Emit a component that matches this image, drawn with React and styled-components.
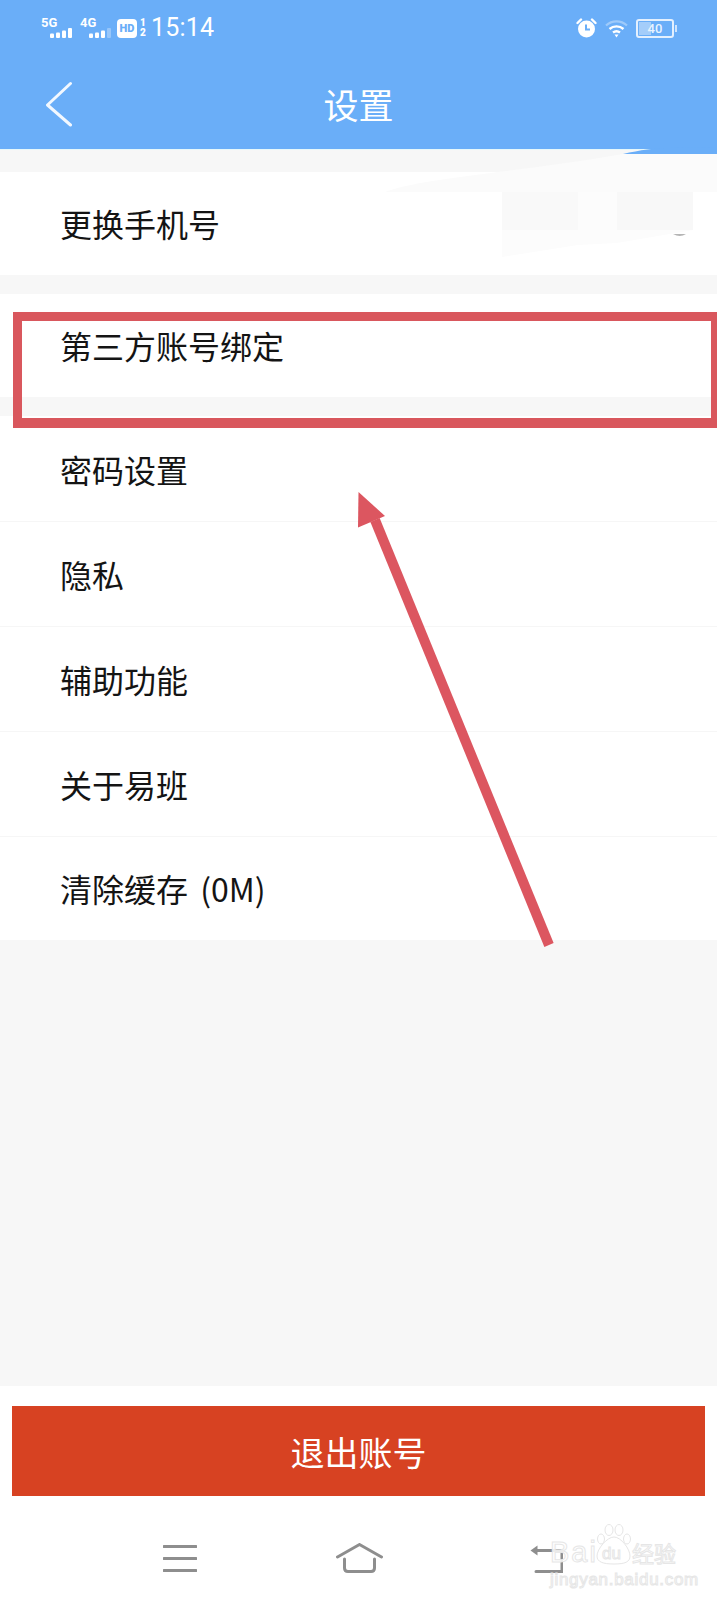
import React from "react";
import styled, { createGlobalStyle } from "styled-components";

const Global = createGlobalStyle`
  html, body { margin: 0; padding: 0; background: #fff; }
  * { box-sizing: border-box; }
`;

const CJK = `"Noto Sans CJK SC", "Noto Sans", sans-serif`;

const Screen = styled.div`
  position: relative;
  width: 717px;
  height: 1600px;
  overflow: hidden;
  display: flex;
  flex-direction: column;
  background: #f7f7f7;
  font-family: ${CJK};
`;
const BlueTop = styled.header`
  height: 150px;
  background: #6aaef8;
  border-bottom: 1px solid #e6f8fb;
  display: flex;
  flex-direction: column;
`;
const StatusBar = styled.div`
  height: 54px;
  padding: 2px 43px 0 41px;
  display: flex;
  align-items: center;
  justify-content: space-between;
  color: #fff;
`;
const StatusGroup = styled.div`
  display: flex;
  align-items: center;
`;
const StatusRight = styled(StatusGroup)`
  gap: 8px;
`;
const Net = styled.div`
  width: 39px;
  display: flex;
  flex-direction: column;
  align-items: flex-start;
  font: 700 13px/10px Roboto, sans-serif;
  svg { display: block; margin-left: 9px; }
`;
const HdBadge = styled.div`
  width: 20px;
  height: 19px;
  margin-left: -2px;
  border-radius: 4px;
  background: #fff;
  color: #6aaef8;
  font: 900 11px/19px Roboto, sans-serif;
  text-align: center;
`;
const SimSlots = styled.div`
  width: 8px;
  margin-left: 2px;
  font: 900 10px/10px Roboto, sans-serif;
  text-align: center;
  display: flex;
  flex-direction: column;
`;
const Clock = styled.div`
  margin-left: 4px;
  font: 400 25px/28px Roboto, sans-serif;
  letter-spacing: 0.2px;
`;
const Battery = styled.div`
  position: relative;
  width: 38px;
  height: 19px;
  padding: 1px;
  border: 2px solid #e4f0fe;
  border-radius: 3px;
  font: 500 13px/13px Roboto, sans-serif;
  text-align: center;
  color: #e8f3ff;
  background: linear-gradient(90deg, #a4cdfa 0 38%, transparent 38%);
  background-clip: content-box;
  &::after {
    content: "";
    position: absolute;
    right: -5px;
    top: 4px;
    width: 2px;
    height: 7px;
    background: #cfe4fd;
  }
`;
const Header = styled.div`
  position: relative;
  flex: 1;
  display: flex;
  align-items: center;
  justify-content: center;
  color: #fff;
  padding-top: 4px;
`;
const BackChevron = styled.svg`
  position: absolute;
  left: 45px;
  top: 27px;
`;
const Title = styled.h1`
  margin: 0;
  font-size: 35px;
  font-weight: 400;
  line-height: 44px;
`;
const Content = styled.main`
  flex: 1;
  padding-top: 22px;
  display: flex;
  flex-direction: column;
  gap: 19px;
`;
const Section = styled.section`
  background: #fff;
`;
const RowList = styled(Section)`
  padding-top: 1px;
`;
const Row = styled.div`
  height: ${(p) => p.$h || 103}px;
  padding: 0 0 1px 60px;
  display: flex;
  align-items: center;
  font-size: 32px;
  line-height: 40px;
  word-spacing: 5px;
  color: #141414;
  border-bottom: 1px solid ${(p) => (p.$line ? "#f6f6f6" : "transparent")};
`;
const Footer = styled.footer`
  height: 214px;
  background: #fff;
  padding: 20px 12px 0;
  display: flex;
  flex-direction: column;
`;
const LogoutButton = styled.button`
  height: 90px;
  border: 0;
  margin: 0;
  padding: 0;
  background: #d74222;
  color: #fff;
  font-family: ${CJK};
  font-size: 34px;
  font-weight: 400;
`;
const NavBar = styled.nav`
  margin-top: 47px;
  padding-left: 151px;
  display: flex;
  align-items: flex-start;
  gap: 139px;
  svg { display: block; }
`;
const RedFrame = styled.div`
  position: absolute;
  left: 13px;
  top: 312px;
  width: 707px;
  height: 116px;
  border: 9px solid #d9575d;
  border-bottom-width: 10px;
`;
const Overlay = styled.svg`
  position: absolute;
  left: 0;
  top: 0;
  pointer-events: none;
`;
const Watermark = styled.div`
  position: absolute;
  left: 550px;
  top: 1523px;
  width: 130px;
  color: rgba(255, 255, 255, 0.85);
  -webkit-text-stroke: 1px #e6e6e6;
`;
const MarkTop = styled.div`
  display: flex;
  align-items: flex-end;
  height: 42px;
`;
const MarkBai = styled.span`
  font: 400 29px/26px "Liberation Sans", sans-serif;
  letter-spacing: 2px;
  width: 45px;
`;
const MarkPaw = styled.div`
  position: relative;
  width: 37px;
  height: 41px;
  svg { display: block; }
`;
const MarkDu = styled.span`
  position: absolute;
  left: 7px;
  top: 20px;
  font: 400 17px/20px "Liberation Sans", sans-serif;
`;
const MarkCn = styled.span`
  font-size: 22px;
  line-height: 26px;
  width: 46px;
  font-family: ${CJK};
`;
const MarkUrl = styled.div`
  margin-top: 7px;
  font: 400 17px/15px "Liberation Sans", sans-serif;
  letter-spacing: 0.7px;
  white-space: nowrap;
`;

const Signal = ({ dim }) => (
  <svg width="24" height="10" viewBox="0 0 24 10">
    <g fill="#fff">
      <rect x="0" y="5.5" width="4" height="4.5" rx="1" />
      <rect x="6" y="4.5" width="4" height="5.5" rx="1" />
      <rect x="12" y="2.5" width="4" height="7.5" rx="1" />
      <rect x="18" y="0" width="4" height="10" rx="1" opacity={dim ? 0.3 : 1} />
    </g>
  </svg>
);

const AlarmIcon = () => (
  <svg width="21" height="20" viewBox="0 0 21 20">
    <circle cx="10.5" cy="11" r="8.5" fill="#fff" />
    <path d="M1.5 5 L5 1.5 M19.5 5 L16 1.5" stroke="#fff" strokeWidth="2.4" strokeLinecap="round" />
    <path d="M10 6.5 V11.5 H14" fill="none" stroke="#6aaef8" strokeWidth="2" />
  </svg>
);

const WifiIcon = () => (
  <svg width="23" height="19" viewBox="0 0 23 19" fill="none">
    <path d="M1 6.5 C7 1 16 1 22 6.5" stroke="#fff" strokeOpacity="0.35" strokeWidth="2.2" />
    <path d="M4.5 10 C8.5 6.5 14.5 6.5 18.5 10" stroke="#fff" strokeWidth="2.4" />
    <path d="M8 13.5 C10 12 13 12 15 13.5" stroke="#fff" strokeWidth="2.4" />
    <path d="M9.5 15.5 H13.5 L11.5 18.5 Z" fill="#fff" />
  </svg>
);

const MenuIcon = () => (
  <svg width="34" height="30" viewBox="0 0 34 30">
    <path d="M1 3.5 H33 M1 15.5 H33 M1 27.5 H33" stroke="#8e8e8e" strokeWidth="3" strokeLinecap="round" />
  </svg>
);

const HomeIcon = () => (
  <svg width="47" height="30" viewBox="0 0 47 30" fill="none" stroke="#8e8e8e" strokeWidth="3" strokeLinecap="round">
    <path d="M1.5 14 L23.5 1.5 L45.5 14" strokeLinejoin="round" />
    <path d="M8.5 16 V25 Q8.5 28.5 12 28.5 H35 Q38.5 28.5 38.5 25 V16" />
  </svg>
);

const BackIcon = () => (
  <svg width="41" height="30" viewBox="-8 0 41 30" fill="none">
    <path d="M0.5 7.5 L7.5 2.5 V12.5 Z" fill="#8e8e8e" />
    <path d="M6 7.5 H33" stroke="#8e8e8e" strokeWidth="3" />
    <path d="M32 7.5 V28.5 H6" stroke="#8e8e8e" strokeWidth="3" strokeLinecap="round" />
  </svg>
);

const Paw = () => (
  <svg width="37" height="41" viewBox="0 0 37 41" fill="rgba(255,255,255,.85)" stroke="#e6e6e6">
    <ellipse cx="6" cy="15" rx="3.5" ry="5" />
    <ellipse cx="14" cy="6" rx="4" ry="5.5" />
    <ellipse cx="24" cy="6" rx="4" ry="5.5" />
    <ellipse cx="32" cy="15" rx="3.5" ry="5" />
    <path d="M19 13 C26 13 35 25 35 32 C35 38 30 40 19 40 C8 40 2 38 2 32 C2 25 12 13 19 13 Z" />
  </svg>
);

const listRows = [
  { label: "密码设置", h: 105, line: true },
  { label: "隐私", h: 105, line: true },
  { label: "辅助功能", h: 105, line: true },
  { label: "关于易班", h: 105, line: true },
  { label: "清除缓存 (0M)", h: 103 },
];

export default function App() {
  return (
    <Screen>
      <Global />
      <BlueTop>
        <StatusBar>
          <StatusGroup>
            <Net>
              5G
              <Signal />
            </Net>
            <Net>
              4G
              <Signal dim />
            </Net>
            <HdBadge>HD</HdBadge>
            <SimSlots>
              <span>1</span>
              <span>2</span>
            </SimSlots>
            <Clock>15:14</Clock>
          </StatusGroup>
          <StatusRight>
            <AlarmIcon />
            <WifiIcon />
            <Battery>40</Battery>
          </StatusRight>
        </StatusBar>
        <Header>
          <BackChevron width="28" height="46" viewBox="0 0 28 46" fill="none">
            <path d="M25.5 2.5 L2.5 24 L25.5 44" stroke="#f2f8ff" strokeWidth="3" strokeLinecap="round" strokeLinejoin="round" />
          </BackChevron>
          <Title>设置</Title>
        </Header>
      </BlueTop>
      <Content>
        <Section>
          <Row>更换手机号</Row>
        </Section>
        <Section>
          <Row>第三方账号绑定</Row>
        </Section>
        <RowList>
          {listRows.map((r) => (
            <Row key={r.label} $h={r.h} $line={r.line}>
              {r.label}
            </Row>
          ))}
        </RowList>
      </Content>
      <Footer>
        <LogoutButton>退出账号</LogoutButton>
        <NavBar>
          <MenuIcon />
          <HomeIcon />
          <BackIcon />
        </NavBar>
      </Footer>

      <Overlay width="717" height="300" viewBox="0 0 717 300">
        <path d="M385 192 C420 178 520 172 623 154 L717 150 V192 Z" fill="#fbfbfb" />
        <path d="M623 154 C640 150 655 148 670 148 L717 147 V154 Z" fill="#6aaef8" />
        <path d="M502 230 H693 L617 243 L578 245 L502 257 Z" fill="#fcfcfc" />
        <rect x="502" y="192" width="76" height="38" fill="#f9f9f9" />
        <rect x="578" y="192" width="39" height="38" fill="#fcfcfc" />
        <rect x="617" y="192" width="76" height="38" fill="#f8f8f8" />
        <path d="M673 234 H686 Q680 238 673 234 Z" fill="#b5b5b5" />
      </Overlay>
      <RedFrame />
      <Overlay width="717" height="1000" viewBox="0 0 717 1000">
        <path d="M375 520 L549 945" stroke="#dc5660" strokeWidth="10" />
        <path d="M358.5 492 L385 516 L358 527.5 Z" fill="#dc5660" />
      </Overlay>
      <Watermark>
        <MarkTop>
          <MarkBai>Bai</MarkBai>
          <MarkPaw>
            <Paw />
            <MarkDu>du</MarkDu>
          </MarkPaw>
          <MarkCn>经验</MarkCn>
        </MarkTop>
        <MarkUrl>jingyan.baidu.com</MarkUrl>
      </Watermark>
    </Screen>
  );
}
